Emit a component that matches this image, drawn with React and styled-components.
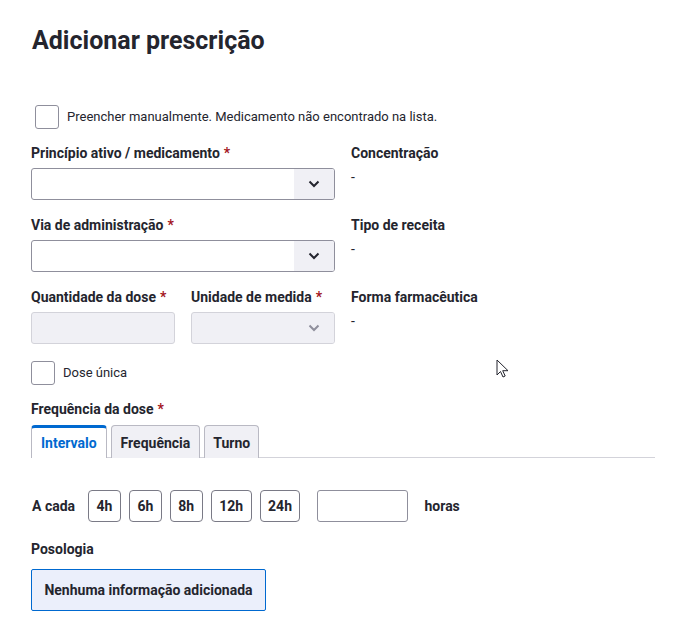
import React from "react";
import styled, { createGlobalStyle } from "styled-components";

const GlobalStyle = createGlobalStyle`
  body {
    margin: 0;
    background: #fff;
    font-family: Roboto, "Liberation Sans", sans-serif;
    color: #24252e;
  }
  * { box-sizing: border-box; }
`;

const Page = styled.div`
  position: relative;
  width: 683px;
  height: 623px;
  padding: 23px 28px 0 31px;
  overflow: hidden;
`;

const Title = styled.h1`
  margin: 0 0 0 1px;
  font-size: 25px;
  line-height: 36px;
  font-weight: 700;
`;

const CheckRow = styled.label`
  display: flex;
  align-items: center;
  gap: 8px;
  margin: ${(p) => p.$mt || 0}px 0 0 ${(p) => p.$ml || 0}px;
  font-size: 13px;
  line-height: 20px;
`;

const Box = styled.span`
  width: 24px;
  height: 24px;
  border: 1px solid #8f8f9c;
  border-radius: 3px;
  background: #fff;
  flex-shrink: 0;
`;

const Grid = styled.div`
  display: grid;
  grid-template-columns: 304px 1fr;
  column-gap: 16px;
  row-gap: 15px;
  margin-top: 14px;
`;

const Pair = styled.div`
  display: grid;
  grid-template-columns: 144px 144px;
  column-gap: 16px;
`;

const Field = styled.div`
  display: flex;
  flex-direction: column;
`;

const Label = styled.div`
  font-size: 14px;
  line-height: 20px;
  font-weight: 700;
  margin-bottom: ${(p) => (p.$mb != null ? p.$mb : 5)}px;
  white-space: nowrap;
`;

const Req = styled.span`
  color: #a3141c;
  margin-left: 4px;
`;

const Value = styled.div`
  font-size: 14px;
  line-height: 20px;
`;

const Select = styled.div`
  display: flex;
  height: 32px;
  border: 1px solid ${(p) => (p.$disabled ? "#d3d3da" : "#8f8f9c")};
  border-radius: 3px;
  background: ${(p) => (p.$disabled ? "#f0f0f5" : "#fff")};
  overflow: hidden;
`;

const SelectBody = styled.div`
  flex: 1;
`;

const SelectBtn = styled.div`
  width: 40px;
  display: flex;
  align-items: center;
  justify-content: center;
  background: #f0f0f5;
  color: ${(p) => (p.$disabled ? "#8f8f9c" : "#24252e")};
`;

const Input = styled.div`
  height: 32px;
  width: ${(p) => p.$w || "auto"};
  border: 1px solid ${(p) => (p.$disabled ? "#d3d3da" : "#8f8f9c")};
  border-radius: 3px;
  background: ${(p) => (p.$disabled ? "#f0f0f5" : "#fff")};
`;

const Tabs = styled.div`
  display: flex;
  gap: 4px;
  margin-top: 6px;
  width: 624px;
  border-bottom: 1px solid #d3d3da;
`;

const Tab = styled.div`
  height: 33px;
  padding: 0 ${(p) => p.$px}px;
  display: flex;
  align-items: center;
  font-size: 14px;
  font-weight: 700;
  border: 1px solid #b9b9c3;
  border-bottom: none;
  border-top: ${(p) => (p.$active ? "3px solid #0069d0" : "1px solid #b9b9c3")};
  border-radius: 4px 4px 0 0;
  background: ${(p) => (p.$active ? "#fff" : "#f0f0f5")};
  color: ${(p) => (p.$active ? "#0069d0" : "#24252e")};
  margin-bottom: -1px;
  padding-top: ${(p) => (p.$active ? 0 : 2)}px;
`;

const IntervalRow = styled.div`
  display: flex;
  align-items: center;
  margin-top: 32px;
  font-size: 14px;
  font-weight: 700;
`;

const RowText = styled.span`
  margin: 0 ${(p) => p.$mr || 0}px 0 ${(p) => p.$ml || 0}px;
`;

const Hours = styled.div`
  display: flex;
  gap: 8px;
  margin-right: 17px;
`;

const HourBtn = styled.div`
  height: 32px;
  padding: 0 7.5px;
  display: flex;
  align-items: center;
  border: 1px solid #7a7a86;
  border-radius: 4px;
  font-size: 14px;
  font-weight: 700;
`;

const Info = styled.div`
  width: 235px;
  height: 42px;
  display: flex;
  align-items: center;
  justify-content: center;
  background: #ebeffb;
  border: 1px solid #0069d0;
  border-radius: 2px;
  font-size: 14px;
  font-weight: 700;
`;

const Cursor = styled.svg`
  position: absolute;
  left: 496px;
  top: 359px;
`;

const Chevron = () => (
  <svg width="14" height="14" viewBox="0 0 14 14">
    <path d="M2.5 4.5 7 9l4.5-4.5" fill="none" stroke="currentColor" strokeWidth="2" />
  </svg>
);

function SelectField({ disabled }) {
  return (
    <Select $disabled={disabled}>
      <SelectBody />
      <SelectBtn $disabled={disabled}>
        <Chevron />
      </SelectBtn>
    </Select>
  );
}

export default function App() {
  return (
    <Page>
      <GlobalStyle />
      <Title>Adicionar prescrição</Title>
      <CheckRow $mt={46} $ml={4}>
        <Box />
        Preencher manualmente. Medicamento não encontrado na lista.
      </CheckRow>
      <Grid>
        <Field>
          <Label>
            Princípio ativo / medicamento<Req>*</Req>
          </Label>
          <SelectField />
        </Field>
        <Field>
          <Label $mb={4}>Concentração</Label>
          <Value>-</Value>
        </Field>
        <Field>
          <Label>
            Via de administração<Req>*</Req>
          </Label>
          <SelectField />
        </Field>
        <Field>
          <Label $mb={4}>Tipo de receita</Label>
          <Value>-</Value>
        </Field>
        <Pair>
          <Field>
            <Label>
              Quantidade da dose<Req>*</Req>
            </Label>
            <Input $disabled />
          </Field>
          <Field>
            <Label>
              Unidade de medida<Req>*</Req>
            </Label>
            <SelectField disabled />
          </Field>
        </Pair>
        <Field>
          <Label $mb={4}>Forma farmacêutica</Label>
          <Value>-</Value>
        </Field>
      </Grid>
      <CheckRow $mt={17}>
        <Box />
        Dose única
      </CheckRow>
      <Label style={{ marginTop: 14, marginBottom: 0 }}>
        Frequência da dose<Req>*</Req>
      </Label>
      <Tabs>
        <Tab $active $px={9}>Intervalo</Tab>
        <Tab $px={9}>Frequência</Tab>
        <Tab $px={8}>Turno</Tab>
      </Tabs>
      <IntervalRow>
        <RowText $ml={1} $mr={13}>A cada</RowText>
        <Hours>
          {["4h", "6h", "8h", "12h", "24h"].map((h) => (
            <HourBtn key={h}>{h}</HourBtn>
          ))}
        </Hours>
        <Input $w="91px" />
        <RowText $ml={16}>horas</RowText>
      </IntervalRow>
      <Label style={{ marginTop: 17, marginBottom: 10 }}>Posologia</Label>
      <Info>Nenhuma informação adicionada</Info>
      <Cursor width="14" height="20" viewBox="0 0 14 20">
        <path d="M1 1v15l3.5-3.5 2.5 5.5 2.2-1-2.5-5.3H12z" fill="#fff" stroke="#24252e" strokeWidth="1" strokeLinejoin="round" />
      </Cursor>
    </Page>
  );
}
